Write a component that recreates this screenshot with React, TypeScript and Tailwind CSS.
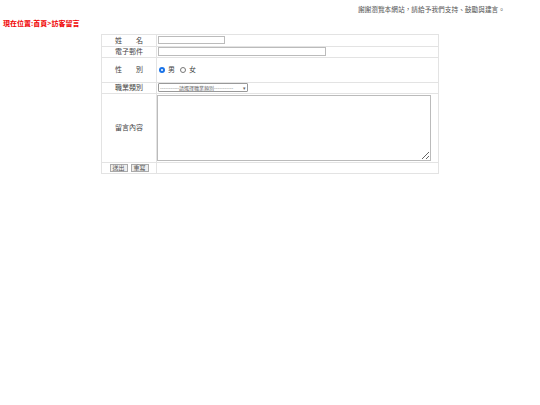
import React from "react";

const font = { fontFamily: '"Noto Sans CJK TC", "Liberation Sans", sans-serif' };

export default function App() {
  return (
    <div className="h-[405px] w-[540px] bg-white text-[7px] leading-none text-[#444]" style={font}>
      {/* Header greeting */}
      <div className="flex justify-end pr-[35px] pt-[6px]">
        <span className="text-[6.7px] text-[#555]">謝謝瀏覽本網站，請給予我們支持、鼓勵與建言。</span>
      </div>

      {/* Breadcrumb */}
      <div className="pl-[3px] pt-[7px] font-bold text-[#f00000]">現在位置:首頁&gt;訪客留言</div>

      {/* Form table */}
      <div className="pl-[101px] pt-[7px]">
        <table className="w-[338px] border-collapse border border-[#e3e3e3]">
          <tbody>
            <tr className="h-[12px]">
              <td className="w-[55px] border border-[#e3e3e3] text-center">姓　　名</td>
              <td className="border border-[#e3e3e3] pl-[1px]">
                <input className="block h-[8px] w-[67px] border border-[#bbb] bg-white" />
              </td>
            </tr>
            <tr className="h-[11px]">
              <td className="border border-[#e3e3e3] text-center">電子郵件</td>
              <td className="border border-[#e3e3e3] pl-[1px]">
                <input className="block h-[9px] w-[168px] border border-[#bbb] bg-white" />
              </td>
            </tr>
            <tr className="h-[25px]">
              <td className="border border-[#e3e3e3] text-center">性　　別</td>
              <td className="border border-[#e3e3e3] pl-[2px]">
                <div className="flex items-center gap-[3px]">
                  <span className="flex h-[6px] w-[6px] items-center justify-center rounded-full bg-[#1a73e8]">
                    <span className="h-[2px] w-[2px] rounded-full bg-white" />
                  </span>
                  <span>男</span>
                  <span className="ml-[2px] h-[6px] w-[6px] rounded-full border border-[#777] bg-white" />
                  <span>女</span>
                </div>
              </td>
            </tr>
            <tr className="h-[11px]">
              <td className="border border-[#e3e3e3] text-center">職業類別</td>
              <td className="border border-[#e3e3e3] pl-[1px]">
                <div className="flex h-[9px] w-[90px] items-center justify-between rounded-[1px] border border-[#999] bg-white px-[1px] text-[5px] text-[#666]">
                  <span className="whitespace-nowrap">-----------請選擇職業類別-----------</span>
                  <span className="text-[5px]">▾</span>
                </div>
              </td>
            </tr>
            <tr className="h-[69px]">
              <td className="border border-[#e3e3e3] text-center">留言內容</td>
              <td className="border border-[#e3e3e3]">
                <textarea className="block h-[66px] w-[274px] resize border border-[#bbb] bg-white" />
              </td>
            </tr>
            <tr className="h-[11px]">
              <td className="border border-[#e3e3e3] text-center">
                <div className="flex justify-center gap-[3px]">
                  <button className="h-[8px] w-[18px] border border-[#aaa] bg-[#efefef] text-[6px] leading-none text-[#555]">送出</button>
                  <button className="h-[8px] w-[18px] border border-[#aaa] bg-[#efefef] text-[6px] leading-none text-[#555]">重寫</button>
                </div>
              </td>
              <td className="border border-[#e3e3e3]" />
            </tr>
          </tbody>
        </table>
      </div>
    </div>
  );
}
